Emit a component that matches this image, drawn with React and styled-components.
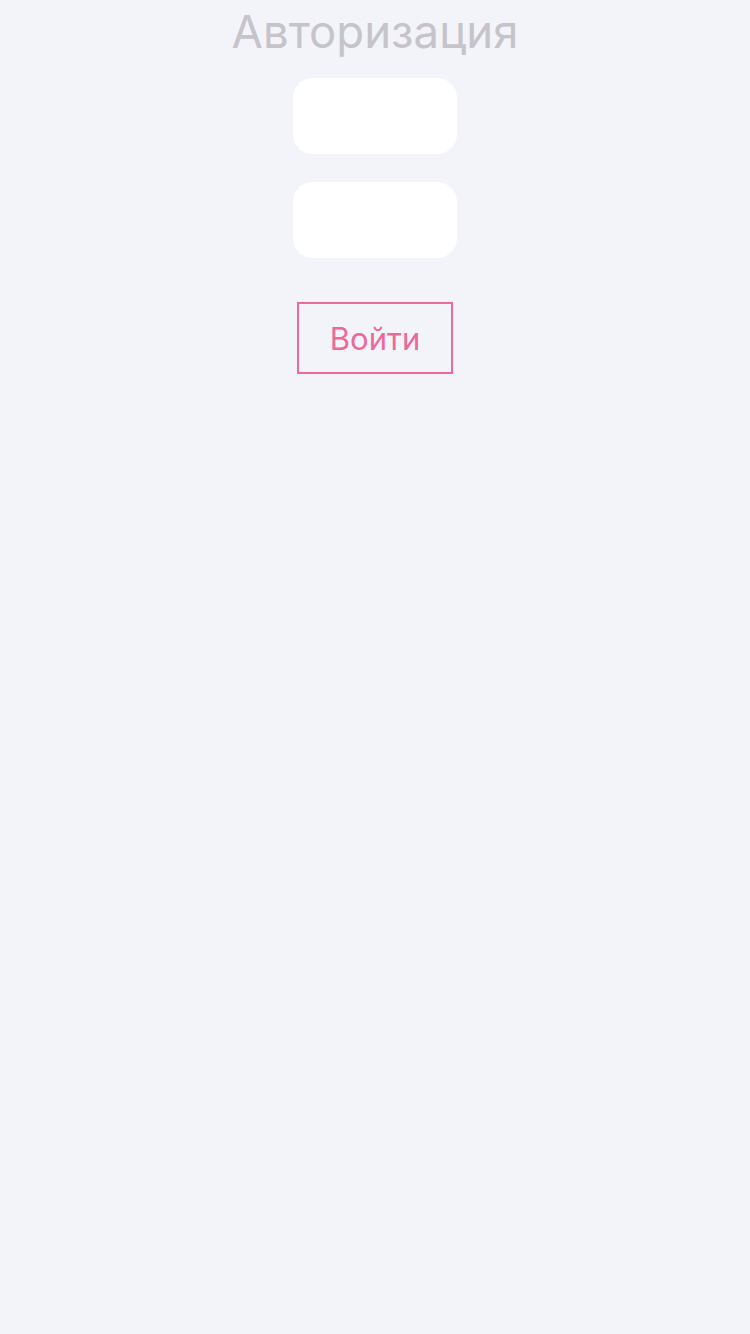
import styled, { createGlobalStyle } from 'styled-components'

const GlobalStyle = createGlobalStyle`
    html, body {
        margin: 0;
        padding: 0;
        background-color: #f3f4f9;
        font-family: "Inter", "Liberation Sans", sans-serif;
    }
`

export default function App(){
    return(
        <>
        <GlobalStyle/>
        <Container>
            <Title>Авторизация</Title>
            <Form onSubmit={e => e.preventDefault()}>
                <Input type="text"/>
                <Input type="password"/>
                <Button type="submit">Войти</Button>
            </Form>
        </Container>
        </>
    );
}

const Container = styled.div`
    min-height: 1334px;
    display: flex;
    flex-direction: column;
    align-items: center;
`
const Title = styled.h1`
    margin: 4px 0 0;
    font-size: 45.5px;
    font-weight: 400;
    line-height: 56px;
    color: #c6c4ca;
`
const Form = styled.form`
    margin-top: 18px;
    display: flex;
    flex-direction: column;
    align-items: center;
    gap: 28px;
`
const Input = styled.input`
    width: 164px;
    height: 76px;
    box-sizing: border-box;
    border: none;
    border-radius: 20px;
    background-color: #ffffff;
    outline: none;
    padding: 0 16px;
    font-size: 24px;
`
const Button = styled.button`
    margin-top: 16px;
    width: 156px;
    height: 72px;
    box-sizing: border-box;
    border: 2px solid #ec6a9a;
    background: transparent;
    color: #ec6a9a;
    font-family: inherit;
    font-size: 31px;
    cursor: pointer;
`
